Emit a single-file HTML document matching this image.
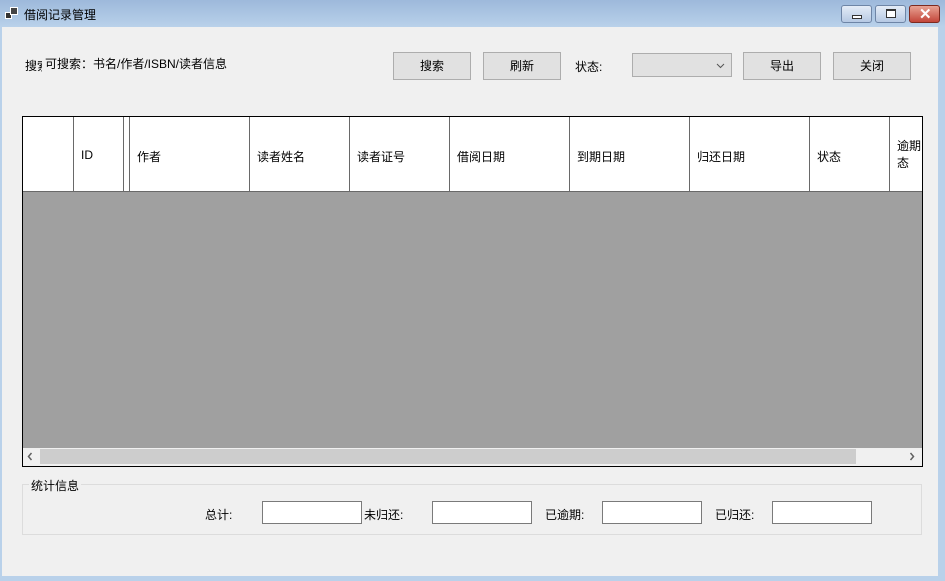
<!DOCTYPE html>
<html><head><meta charset="utf-8"><style>
*{margin:0;padding:0;box-sizing:border-box}
body{width:945px;height:581px;position:relative;overflow:hidden;background:#b9d1ea;font-family:"Liberation Sans","Noto Sans CJK SC",sans-serif;font-size:12px;color:#000}
.abs{position:absolute}
.title{left:0;top:0;width:945px;height:27px;background:linear-gradient(#9db9db,#b9d1ea)}
.client{left:2px;top:27px;width:936px;height:549px;background:#f0f0f0}
.btn{position:absolute;height:28px;background:#e1e1e1;border:1px solid #adadad;text-align:center;line-height:26px}
.wb{position:absolute;top:5px;height:18px;border:1px solid #6e85a6;border-radius:3px;background:linear-gradient(#e4ecf7,#b6c9e3)}
.t{position:absolute;white-space:nowrap}
.vl{position:absolute;top:117px;width:1px;height:75px;background:#696969}
.inp{position:absolute;top:501px;width:100px;height:23px;background:#fff;border:1px solid #7a7a7a}
</style></head><body>
<div class="abs title"></div>
<div class="abs" style="left:5px;top:12px;width:7px;height:7px;background:#333;border:1px solid #fff"></div>
<div class="abs" style="left:10px;top:7px;width:8px;height:8px;background:#444;border:1px solid #fff"></div>
<div class="t" style="left:24px;top:6px;font-size:12px">借阅记录管理</div>
<div class="wb" style="left:841px;width:31px"><div class="abs" style="left:10px;top:9px;width:10px;height:4px;background:#fff;border:1px solid #333"></div></div>
<div class="wb" style="left:875px;width:31px"><div class="abs" style="left:10px;top:3px;width:10px;height:9px;border:1px solid #333;border-top-width:2px;background:#fff"></div></div>
<div class="wb" style="left:909px;width:31px;border-color:#7d2a20;background:linear-gradient(#e8a394,#c3463a)"><div class="t" style="left:9px;top:-1px;color:#fff;font-weight:bold;font-size:15px">✕</div></div>
<div class="abs client"></div>
<div class="abs" style="left:25px;top:55px;width:17px;height:18px;overflow:hidden"><div class="t" style="left:0;top:2px">搜索</div></div>
<div class="t" style="left:45px;top:55px">可搜索：书名/作者/ISBN/读者信息</div>
<div class="btn" style="left:393px;top:52px;width:78px">搜索</div>
<div class="btn" style="left:483px;top:52px;width:78px">刷新</div>
<div class="t" style="left:575px;top:58px">状态:</div>
<div class="btn" style="left:632px;top:53px;width:100px;height:24px"><svg class="abs" style="right:6px;top:9px" width="9" height="6"><path d="M1 1L4.5 4.5L8 1" stroke="#555" fill="none"/></svg></div>
<div class="btn" style="left:743px;top:52px;width:78px">导出</div>
<div class="btn" style="left:833px;top:52px;width:78px">关闭</div>
<div class="abs" style="left:22px;top:116px;width:901px;height:351px;border:1px solid #000;background:#a0a0a0"></div>
<div class="abs" style="left:23px;top:117px;width:899px;height:75px;background:#fff;border-bottom:1px solid #696969"></div>
<div class="vl" style="left:73px"></div><div class="vl" style="left:123px"></div><div class="vl" style="left:129px"></div><div class="vl" style="left:249px"></div><div class="vl" style="left:349px"></div><div class="vl" style="left:449px"></div><div class="vl" style="left:569px"></div><div class="vl" style="left:689px"></div><div class="vl" style="left:809px"></div><div class="vl" style="left:889px"></div>
<div class="t" style="left:81px;top:148px">ID</div>
<div class="t" style="left:137px;top:148px">作者</div>
<div class="t" style="left:257px;top:148px">读者姓名</div>
<div class="t" style="left:357px;top:148px">读者证号</div>
<div class="t" style="left:457px;top:148px">借阅日期</div>
<div class="t" style="left:577px;top:148px">到期日期</div>
<div class="t" style="left:697px;top:148px">归还日期</div>
<div class="t" style="left:817px;top:148px">状态</div>
<div class="abs" style="left:890px;top:118px;width:32px;height:73px;overflow:hidden"><div class="t" style="left:7px;top:20px;line-height:17px">逾期<br>态</div></div>
<div class="abs" style="left:23px;top:448px;width:899px;height:18px;background:#f0f0f0"></div>
<div class="abs" style="left:40px;top:449px;width:816px;height:15px;background:#cdcdcd"></div>
<svg class="abs" style="left:27px;top:452px" width="6" height="9"><path d="M4.5 1L1.5 4.5L4.5 8" stroke="#606060" stroke-width="1.5" fill="none"/></svg>
<svg class="abs" style="left:909px;top:452px" width="6" height="9"><path d="M1.5 1L4.5 4.5L1.5 8" stroke="#606060" stroke-width="1.5" fill="none"/></svg>
<div class="abs" style="left:22px;top:484px;width:900px;height:51px;border:1px solid #dcdcdc"></div>
<div class="t" style="left:29px;top:477px;background:#f0f0f0;padding:0 2px">统计信息</div>
<div class="t" style="left:205px;top:506px">总计:</div>
<div class="inp" style="left:262px"></div>
<div class="t" style="left:364px;top:506px">未归还:</div>
<div class="inp" style="left:432px"></div>
<div class="t" style="left:545px;top:506px">已逾期:</div>
<div class="inp" style="left:602px"></div>
<div class="t" style="left:715px;top:506px">已归还:</div>
<div class="inp" style="left:772px"></div>
</body></html>
